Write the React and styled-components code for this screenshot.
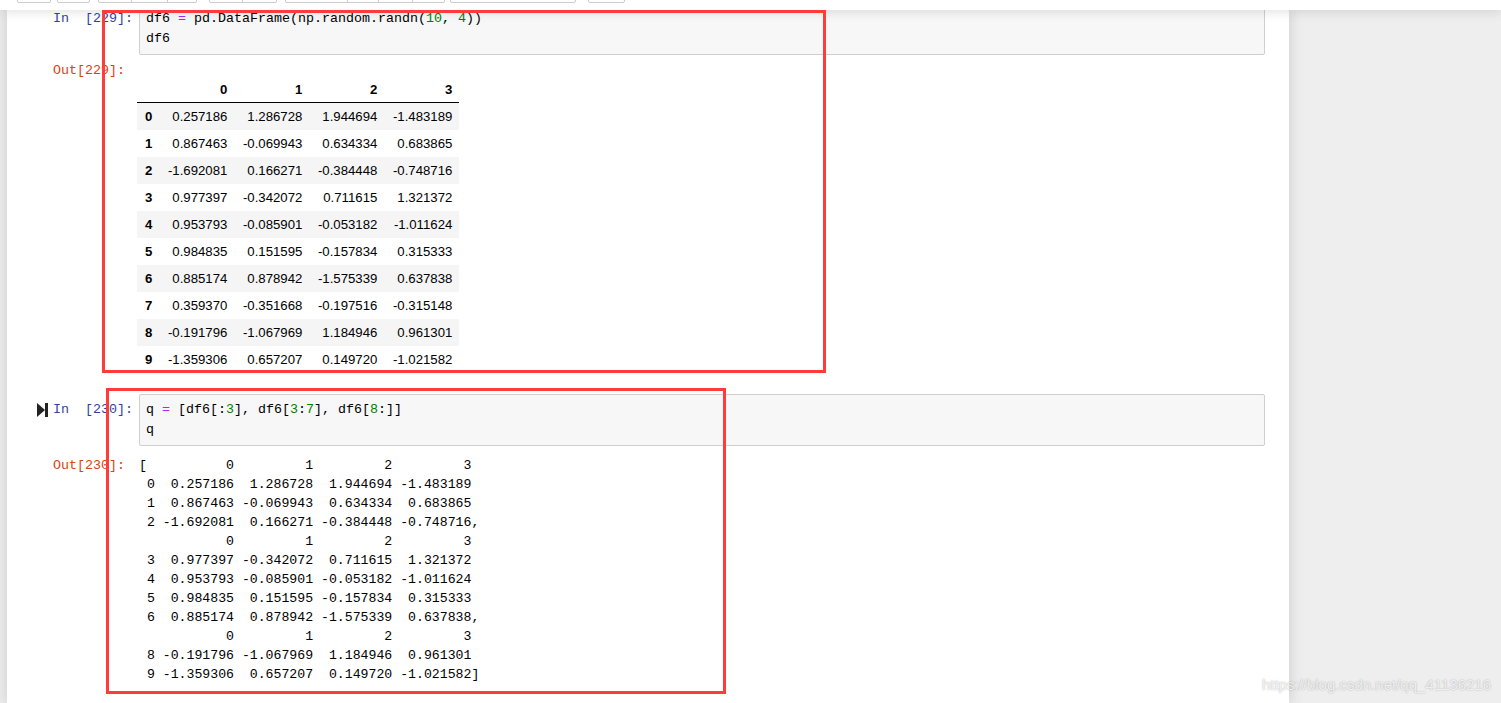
import React from 'react';
import styled, { createGlobalStyle } from 'styled-components';

const GlobalStyle = createGlobalStyle`
  html, body {
    margin: 0;
    padding: 0;
    background: #eeeeee;
    overflow: hidden;
  }
`;

const mono = `"Liberation Mono", "DejaVu Sans Mono", monospace`;

const Page = styled.div`
  position: relative;
  width: 1501px;
  height: 703px;
  display: flex;
  flex-direction: column;
  overflow: hidden;
  background: #eeeeee;
`;

const Header = styled.header`
  position: relative;
  z-index: 2;
  height: 10px;
  flex-shrink: 0;
  box-sizing: border-box;
  display: flex;
  align-items: flex-end;
  padding: 0 0 7px 17px;
  background: #fff;
  overflow: hidden;
  box-shadow: 0 0 12px 1px rgba(87, 87, 87, 0.2);
`;

const ToolGroup = styled.div`
  display: flex;
  flex-shrink: 0;
  height: 22px;
  margin-left: ${p => p.$gap || 0}px;
  border: 1px solid #cccccc;
  border-radius: 2px;
  background: #fff;
`;

const ToolBtn = styled.div`
  width: ${p => p.$w}px;
  height: 100%;
  & + & {
    border-left: 1px solid #cccccc;
  }
`;

const Main = styled.main`
  flex: 1;
  min-height: 0;
  display: flex;
  overflow: hidden;
`;

const Panel = styled.div`
  width: 1282px;
  margin-left: 7px;
  flex-shrink: 0;
  display: flex;
  flex-direction: column;
  gap: 21px;
  background: #fff;
  box-shadow: 0 0 12px 1px rgba(87, 87, 87, 0.2);
`;

const Cell = styled.div`
  display: flex;
  flex-direction: column;
  margin-top: ${p => (p.$scrolled ? '-7px' : '0')};
`;

const Row = styled.div`
  display: flex;
  align-items: flex-start;
  padding-top: ${p => p.$pad || 0}px;
`;

const Prompt = styled.div`
  width: 132px;
  flex-shrink: 0;
  box-sizing: border-box;
  display: flex;
  align-items: flex-start;
  padding: ${p => p.$top || 0}px 0 0 30px;
  font-family: ${mono};
  font-size: 13.33px;
  line-height: 20px;
  white-space: pre;
  color: ${p => (p.$out ? '#D84315' : '#303F9F')};
`;

const RunSlot = styled.span`
  width: 16px;
  height: 20px;
  flex-shrink: 0;
  display: flex;
  align-items: center;
`;

const InputBox = styled.div`
  flex: 1;
  margin-right: 24px;
  padding: 5px 6px;
  border: 1px solid #cfcfcf;
  border-radius: 2px;
  background: #f7f7f7;
  font-family: ${mono};
  font-size: 13.33px;
  line-height: 20px;
  color: #000;
  white-space: pre;
`;

const Op = styled.span`
  color: #aa22ff;
`;

const Num = styled.span`
  color: #008000;
`;

const Pre = styled.pre`
  margin: 0;
  font-family: ${mono};
  font-size: 13.2px;
  line-height: 19px;
  color: #000;
`;

const Table = styled.table`
  margin: 15px 0 0 -2px;
  border-collapse: collapse;
  border-spacing: 0;
  font-family: "Liberation Sans", Arial, sans-serif;
  font-size: 13.2px;
  color: #000;

  th, td {
    box-sizing: border-box;
    width: 75px;
    padding: 6px 6.7px 6px 0;
    line-height: 15px;
    text-align: right;
    white-space: nowrap;
  }
  th:first-child {
    width: 22px;
  }
  th {
    font-weight: bold;
  }
  thead th {
    border-bottom: 1px solid #000;
    padding-bottom: 5px;
  }
  tbody tr:nth-child(odd) {
    background: #f5f5f5;
  }
`;

const Mark = styled.div`
  position: absolute;
  z-index: 5;
  left: ${p => p.$x}px;
  top: ${p => p.$y}px;
  width: ${p => p.$w}px;
  height: ${p => p.$h}px;
  box-sizing: border-box;
  border: 3px solid #ff3b3b;
  pointer-events: none;
`;

const Watermark = styled.div`
  position: absolute;
  z-index: 6;
  right: 10px;
  bottom: 10px;
  font-family: "Liberation Sans", Arial, sans-serif;
  font-size: 15px;
  color: rgba(255, 255, 255, 0.8);
  text-shadow: 0 0 1.5px rgba(0, 0, 0, 0.35);
`;

const RunIcon = () => (
  <svg width="11" height="14" viewBox="0 0 11 14">
    <path d="M0 0 L8 7 L0 14 Z" fill="#222" />
    <rect x="8" y="0" width="3" height="14" fill="#222" />
  </svg>
);

const toolbar = [
  { gap: 0, btns: [32] },
  { gap: 6, btns: [31] },
  { gap: 8, btns: [32, 35, 28] },
  { gap: 12, btns: [32, 33] },
  { gap: 8, btns: [61, 30, 33, 31] },
  { gap: 5, btns: [124] },
  { gap: 12, btns: [35] },
];

const df6 = [
  ['0.257186', '1.286728', '1.944694', '-1.483189'],
  ['0.867463', '-0.069943', '0.634334', '0.683865'],
  ['-1.692081', '0.166271', '-0.384448', '-0.748716'],
  ['0.977397', '-0.342072', '0.711615', '1.321372'],
  ['0.953793', '-0.085901', '-0.053182', '-1.011624'],
  ['0.984835', '0.151595', '-0.157834', '0.315333'],
  ['0.885174', '0.878942', '-1.575339', '0.637838'],
  ['0.359370', '-0.351668', '-0.197516', '-0.315148'],
  ['-0.191796', '-1.067969', '1.184946', '0.961301'],
  ['-1.359306', '0.657207', '0.149720', '-1.021582'],
];

const pad = (s, n) => s.padStart(n, ' ');
const header = ' ' + ['0', '1', '2', '3'].map(c => pad(c, 10)).join('');
const line = i => String(i) + df6[i].map(v => pad(v, 10)).join('');

const listRepr = [
  '[' + header,
  ' ' + line(0),
  ' ' + line(1),
  ' ' + line(2) + ',',
  ' ' + header,
  ' ' + line(3),
  ' ' + line(4),
  ' ' + line(5),
  ' ' + line(6) + ',',
  ' ' + header,
  ' ' + line(8),
  ' ' + line(9) + ']',
].join('\n');

export default function App() {
  return (
    <Page>
      <GlobalStyle />
      <Header>
        {toolbar.map((g, i) => (
          <ToolGroup key={i} $gap={g.gap}>
            {g.btns.map((w, j) => (
              <ToolBtn key={j} $w={w} />
            ))}
          </ToolGroup>
        ))}
      </Header>

      <Main>
        <Panel>
          <Cell $scrolled>
            <Row>
              <Prompt $top={6}>
                <RunSlot />
                {'In\u00a0\u00a0[229]:'}
              </Prompt>
              <InputBox>
                {'df6 '}<Op>=</Op>{' pd.DataFrame(np.random.randn('}<Num>10</Num>{', '}<Num>4</Num>{'))\ndf6'}
              </InputBox>
            </Row>
            <Row $pad={6}>
              <Prompt $out>
                <RunSlot />
                Out[229]:
              </Prompt>
              <Table>
                <thead>
                  <tr>
                    <th></th>
                    <th>0</th>
                    <th>1</th>
                    <th>2</th>
                    <th>3</th>
                  </tr>
                </thead>
                <tbody>
                  {df6.map((r, i) => (
                    <tr key={i}>
                      <th>{i}</th>
                      {r.map((v, j) => (
                        <td key={j}>{v}</td>
                      ))}
                    </tr>
                  ))}
                </tbody>
              </Table>
            </Row>
          </Cell>

          <Cell>
            <Row>
              <Prompt $top={6}>
                <RunSlot>
                  <RunIcon />
                </RunSlot>
                {'In\u00a0\u00a0[230]:'}
              </Prompt>
              <InputBox>
                {'q '}<Op>=</Op>{' [df6[:'}<Num>3</Num>{'], df6['}<Num>3</Num>{':'}<Num>7</Num>{'], df6['}<Num>8</Num>{':]]\nq'}
              </InputBox>
            </Row>
            <Row $pad={10}>
              <Prompt $out>
                <RunSlot />
                Out[230]:
              </Prompt>
              <Pre>{listRepr}</Pre>
            </Row>
          </Cell>
        </Panel>
      </Main>

      <Mark $x={102} $y={10} $w={724} $h={363} />
      <Mark $x={106} $y={388} $w={620} $h={306} />
      <Watermark>https://blog.csdn.net/qq_41136216</Watermark>
    </Page>
  );
}
